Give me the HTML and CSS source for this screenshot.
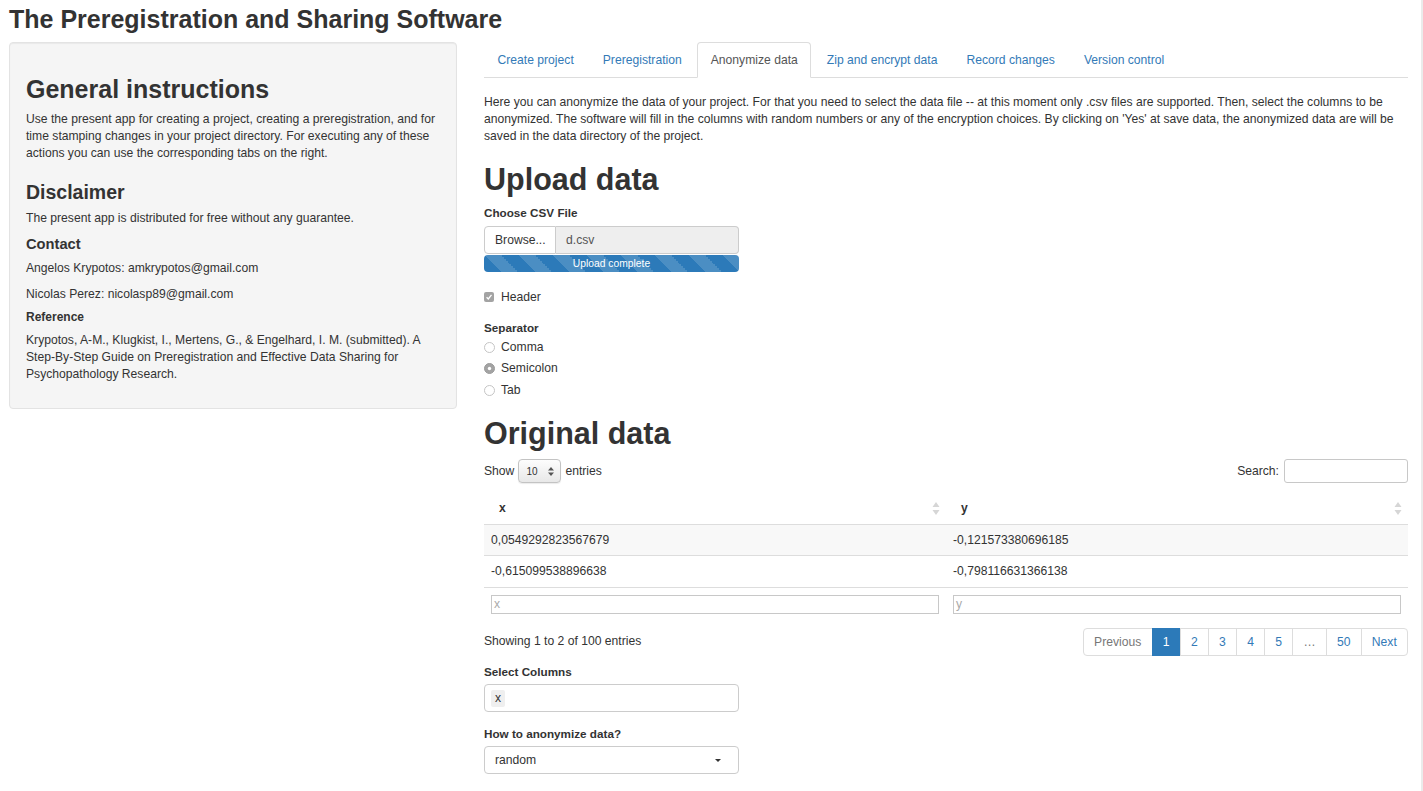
FILE: index.html
```html
<!DOCTYPE html>
<html lang="en">
<head>
<meta charset="utf-8">
<title>The Preregistration and Sharing Software</title>
<link rel="stylesheet" href="styles.css">
</head>
<body>
<div class="page">
  <h2 class="app-title">The Preregistration and Sharing Software</h2>
  <div class="layout">
    <aside class="well">
      <h2>General instructions</h2>
      <p>Use the present app for creating a project, creating a preregistration, and for time stamping changes in your project directory. For executing any of these actions you can use the corresponding tabs on the right.</p>
      <h3>Disclaimer</h3>
      <p>The present app is distributed for free without any guarantee.</p>
      <h4>Contact</h4>
      <p>Angelos Krypotos: amkrypotos@gmail.com</p>
      <p>Nicolas Perez: nicolasp89@gmail.com</p>
      <h5>Reference</h5>
      <p>Krypotos, A-M., Klugkist, I., Mertens, G., &amp; Engelhard, I. M. (submitted). A Step-By-Step Guide on Preregistration and Effective Data Sharing for Psychopathology Research.</p>
    </aside>

    <main class="main">
      <ul class="nav-tabs">
        <li><a href="#">Create project</a></li>
        <li><a href="#">Preregistration</a></li>
        <li class="active"><a href="#">Anonymize data</a></li>
        <li><a href="#">Zip and encrypt data</a></li>
        <li><a href="#">Record changes</a></li>
        <li><a href="#">Version control</a></li>
      </ul>

      <div class="tab-content">
        <p class="intro">Here you can anonymize the data of your project. For that you need to select the data file -- at this moment only .csv files are supported. Then, select the columns to be anonymized. The software will fill in the columns with random numbers or any of the encryption choices. By clicking on 'Yes' at save data, the anonymized data are will be saved in the data directory of the project.</p>

        <h1 class="upload-title">Upload data</h1>
        <div class="file-group">
          <label class="control-label">Choose CSV File</label>
          <div class="file-input">
            <span class="btn-browse">Browse...</span>
            <span class="file-name">d.csv</span>
          </div>
          <div class="progress"><div class="progress-bar">Upload complete</div></div>
        </div>

        <div class="checkbox">
          <svg class="check-icon" width="10" height="10" viewBox="0 0 10 10"><rect x="0" y="0" width="10" height="10" rx="2" fill="#a3a3a3"/><path d="M2.6 5.2 L4.3 7 L7.5 2.9" fill="none" stroke="#fff" stroke-width="1.3"/></svg>
          <span>Header</span>
        </div>

        <div class="sep-group">
          <label class="control-label">Separator</label>
          <div class="radio">
            <svg class="radio-icon" width="11" height="11" viewBox="0 0 11 11"><circle cx="5.5" cy="5.5" r="5" fill="#fff" stroke="#c4c4c4"/></svg>
            <span>Comma</span>
          </div>
          <div class="radio">
            <svg class="radio-icon" width="11" height="11" viewBox="0 0 11 11"><circle cx="5.5" cy="5.5" r="5" fill="#a3a3a3" stroke="#9a9a9a"/><circle cx="5.5" cy="5.5" r="1.7" fill="#fff"/></svg>
            <span>Semicolon</span>
          </div>
          <div class="radio">
            <svg class="radio-icon" width="11" height="11" viewBox="0 0 11 11"><circle cx="5.5" cy="5.5" r="5" fill="#fff" stroke="#c4c4c4"/></svg>
            <span>Tab</span>
          </div>
        </div>

        <h1 class="orig-title">Original data</h1>

        <div class="dt-top">
          <div class="dt-length">
            <span>Show</span>
            <span class="mac-select">
              <span>10</span>
              <svg width="6" height="9" viewBox="0 0 6 9"><path d="M3 0 L6 3.5 H0 Z M3 9 L6 5.5 H0 Z" fill="#555"/></svg>
            </span>
            <span>entries</span>
          </div>
          <div class="dt-search">
            <span>Search:</span>
            <span class="search-box"></span>
          </div>
        </div>

        <table class="dt">
          <thead>
            <tr>
              <th><div class="th-inner"><span>x</span><svg width="8" height="13" viewBox="0 0 8 13"><path d="M4 0 L7.5 5 H0.5 Z M4 13 L7.5 8 H0.5 Z" fill="#d6d6d6"/></svg></div></th>
              <th><div class="th-inner"><span>y</span><svg width="8" height="13" viewBox="0 0 8 13"><path d="M4 0 L7.5 5 H0.5 Z M4 13 L7.5 8 H0.5 Z" fill="#d6d6d6"/></svg></div></th>
            </tr>
          </thead>
          <tbody>
            <tr class="odd"><td>0,0549292823567679</td><td>-0,121573380696185</td></tr>
            <tr class="even"><td>-0,615099538896638</td><td>-0,798116631366138</td></tr>
          </tbody>
          <tfoot>
            <tr>
              <td><span class="filter-box">x</span></td>
              <td><span class="filter-box">y</span></td>
            </tr>
          </tfoot>
        </table>

        <div class="dt-bottom">
          <div class="dt-info">Showing 1 to 2 of 100 entries</div>
          <ul class="pagination">
            <li class="disabled"><a href="#">Previous</a></li>
            <li class="active"><a href="#">1</a></li>
            <li><a href="#">2</a></li>
            <li><a href="#">3</a></li>
            <li><a href="#">4</a></li>
            <li><a href="#">5</a></li>
            <li class="disabled"><a href="#">…</a></li>
            <li><a href="#">50</a></li>
            <li><a href="#">Next</a></li>
          </ul>
        </div>

        <div class="cols-group">
          <label class="control-label">Select Columns</label>
          <div class="selectize"><span class="chip">x</span></div>
        </div>

        <div class="how-group">
          <label class="control-label">How to anonymize data?</label>
          <div class="select-single"><span>random</span><span class="caret"></span></div>
        </div>
      </div>
    </main>
  </div>
</div>
</body>
</html>
```

FILE: styles.css
```css
html, body {
  margin: 0;
  padding: 0;
  background: #fff;
}

body {
  font-family: "Liberation Sans", Arial, Helvetica, sans-serif;
  font-size: 12.15px;
  line-height: 17px;
  color: #333;
}

.page {
  box-sizing: border-box;
  min-height: 100vh;
  padding: 0 13px 0 9px;
  border-right: 2px solid #ebebeb;
}

.app-title {
  margin: 0 0 9px;
  padding-top: 5px;
  font-size: 25px;
  line-height: 28px;
  font-weight: bold;
  color: #333;
}

.layout {
  display: grid;
  grid-template-columns: 448px 1fr;
  column-gap: 27px;
  align-items: start;
}

/* ---------- sidebar ---------- */
.well {
  background: #f5f5f5;
  border: 1px solid #e3e3e3;
  border-radius: 4px;
  box-shadow: inset 0 1px 1px rgba(0,0,0,.05);
  padding: 16px;
}

.well h2 {
  margin: 17px 0 7px;
  font-size: 25px;
  line-height: 27.5px;
  font-weight: bold;
}

.well h3 {
  margin: 20px 0 7.2px;
  font-size: 19.5px;
  line-height: 21.5px;
  font-weight: bold;
}

.well h4 {
  margin: 9.3px 0 7.8px;
  font-size: 14.7px;
  line-height: 16.2px;
  font-weight: bold;
}

.well h5 {
  margin: 8.5px 0 7.8px;
  font-size: 12px;
  line-height: 13.2px;
  font-weight: bold;
}

.well p {
  margin: 0 0 8.5px;
}

/* ---------- tabs ---------- */
.nav-tabs {
  display: flex;
  margin: 0;
  padding: 0;
  list-style: none;
  border-bottom: 1px solid #ddd;
}

.nav-tabs li {
  margin-bottom: -1px;
}

.nav-tabs a {
  display: block;
  padding: 8.5px 12.5px;
  margin-right: 2px;
  line-height: 17px;
  border: 1px solid transparent;
  border-radius: 4px 4px 0 0;
  color: #337ab7;
  text-decoration: none;
}

.nav-tabs li.active a {
  color: #555;
  background: #fff;
  border-color: #ddd #ddd transparent;
}

/* ---------- content ---------- */
.intro {
  margin: 15.5px 0 0;
}

.upload-title,
.orig-title {
  font-size: 30.5px;
  line-height: 33.5px;
  font-weight: bold;
  color: #333;
}

.upload-title {
  margin: 18px 0 8px;
}

.orig-title {
  margin: 17.9px 0 9px;
}

.control-label {
  display: block;
  font-weight: bold;
  font-size: 11.7px;
  line-height: 17px;
}

.file-group .control-label {
  margin-bottom: 4.5px;
}

.file-input {
  display: flex;
  width: 255px;
  height: 28px;
  box-sizing: border-box;
}

.btn-browse {
  box-sizing: border-box;
  width: 72px;
  height: 28px;
  padding-left: 10px;
  line-height: 26px;
  background: #fff;
  border: 1px solid #ccc;
  border-radius: 4px 0 0 4px;
  color: #333;
}

.file-name {
  flex: 1;
  box-sizing: border-box;
  height: 28px;
  padding-left: 10px;
  line-height: 26px;
  background: #eee;
  border: 1px solid #ccc;
  border-left: 0;
  border-radius: 0 4px 4px 0;
  color: #555;
}

.progress {
  width: 255px;
  height: 17px;
  margin-top: 1px;
  border-radius: 4px;
  overflow: hidden;
  background: #f5f5f5;
}

.progress-bar {
  height: 17px;
  line-height: 17px;
  font-size: 10.3px;
  color: #fff;
  text-align: center;
  background-color: #2c7ab9;
  background-image: linear-gradient(45deg, rgba(255,255,255,.15) 25%, transparent 25%, transparent 50%, rgba(255,255,255,.15) 50%, rgba(255,255,255,.15) 75%, transparent 75%, transparent);
  background-size: 34px 34px;
}

.checkbox {
  display: flex;
  align-items: center;
  gap: 7px;
  margin-top: 17px;
  height: 17px;
}

.check-icon,
.radio-icon {
  flex: none;
}

.sep-group {
  margin-top: 13.7px;
}

.radio {
  display: flex;
  align-items: center;
  gap: 6px;
  height: 17px;
  margin-top: 4.3px;
}

.sep-group .control-label + .radio {
  margin-top: 3px;
}

/* ---------- datatable ---------- */
.dt-top {
  display: flex;
  justify-content: space-between;
  align-items: center;
  height: 24px;
}

.dt-length,
.dt-search {
  display: flex;
  align-items: center;
  gap: 4px;
}

.mac-select {
  box-sizing: border-box;
  display: flex;
  align-items: center;
  justify-content: space-between;
  width: 43px;
  height: 24px;
  padding: 0 6px 0 7px;
  font-size: 10px;
  border: 1px solid #c3c3c3;
  border-radius: 4px;
  background: linear-gradient(#fdfdfd, #e8e8e8);
  box-shadow: 0 1px 1px rgba(0,0,0,.08);
}

.search-box {
  box-sizing: border-box;
  display: block;
  width: 124px;
  height: 24px;
  margin-left: 1px;
  border: 1px solid #c8c8c8;
  border-radius: 3px;
  background: #fff;
}

.dt {
  width: 100%;
  margin-top: 6.8px;
  border-collapse: collapse;
  table-layout: fixed;
}

.dt th {
  padding: 10.5px 6px 6.5px 15px;
  text-align: left;
  font-weight: bold;
  border-bottom: 1px solid #ddd;
}

.th-inner {
  display: flex;
  justify-content: space-between;
  align-items: center;
  line-height: 17px;
}

.dt tbody td {
  padding: 7px;
  line-height: 16.5px;
}

.dt tbody tr + tr td {
  border-top: 1px solid #ddd;
}

.dt tbody tr.odd td {
  background: #f8f8f8;
}

.dt tfoot td {
  padding: 7px;
  border-top: 1px solid #ddd;
}

.filter-box {
  box-sizing: border-box;
  display: block;
  width: 100%;
  height: 19.5px;
  padding-left: 2px;
  line-height: 17.5px;
  border: 1px solid #c8c8c8;
  color: #aaa;
  background: #fff;
}

.dt-bottom {
  display: flex;
  justify-content: space-between;
  align-items: center;
  margin-top: 6.5px;
}

.pagination {
  display: flex;
  margin: 0;
  padding: 0;
  list-style: none;
}

.pagination a {
  display: block;
  padding: 5px 10.2px;
  line-height: 16px;
  margin-left: -1px;
  border: 1px solid #ddd;
  color: #337ab7;
  text-decoration: none;
  background: #fff;
}

.pagination li:first-child a {
  margin-left: 0;
  border-radius: 4px 0 0 4px;
}

.pagination li:last-child a {
  border-radius: 0 4px 4px 0;
}

.pagination li.disabled a {
  color: #777;
}

.pagination li.active a {
  background: #2c7ab9;
  border-color: #2c7ab9;
  color: #fff;
}

/* ---------- bottom inputs ---------- */
.cols-group {
  margin-top: 7.2px;
}

.cols-group .control-label {
  margin-bottom: 4px;
}

.selectize {
  box-sizing: border-box;
  display: flex;
  align-items: center;
  width: 255px;
  height: 28px;
  padding-left: 6px;
  border: 1px solid #ccc;
  border-radius: 4px;
  background: #fff;
}

.chip {
  padding: 0 4px;
  line-height: 17px;
  background: #efefef;
  border-radius: 2px;
  color: #333;
}

.how-group {
  margin-top: 13.3px;
}

.how-group .control-label {
  margin-bottom: 3.8px;
}

.select-single {
  box-sizing: border-box;
  display: flex;
  align-items: center;
  justify-content: space-between;
  width: 255px;
  height: 28px;
  padding: 0 17px 0 10px;
  border: 1px solid #ccc;
  border-radius: 4px;
  background: #fff;
}

.caret {
  width: 0;
  height: 0;
  border-top: 3.5px solid #333;
  border-left: 3.5px solid transparent;
  border-right: 3.5px solid transparent;
}
```
